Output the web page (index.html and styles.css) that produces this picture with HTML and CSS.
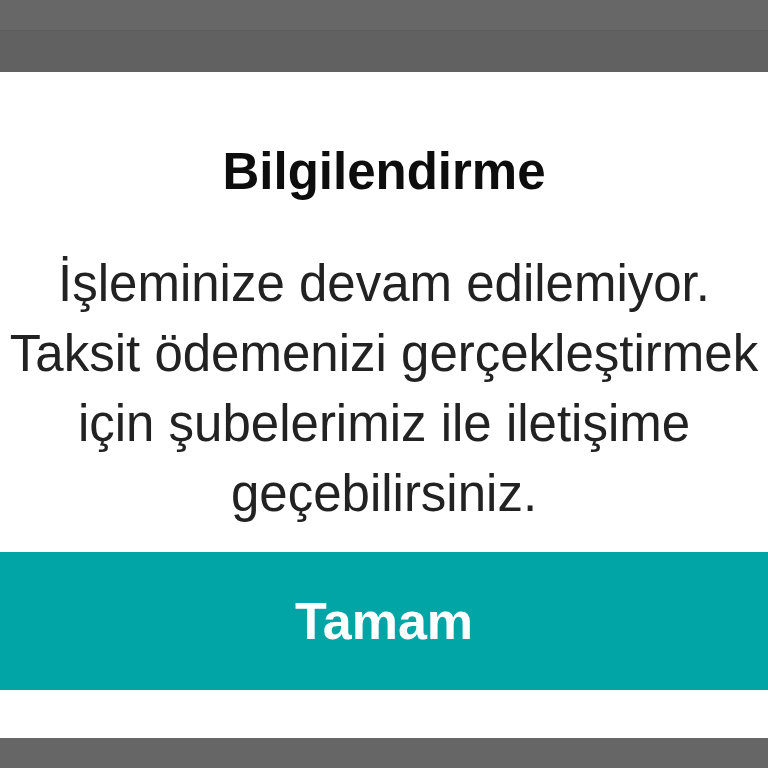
FILE: index.html
```html
<!DOCTYPE html>
<html>
<head>
  <title>Bilgilendirme</title>
  <link rel="stylesheet" href="styles.css">
</head>
<body>
  <!-- dimmed page behind the dialog -->
  <div class="top-bar">
    <div class="top-strip"></div>
    <div class="top-under"></div>
  </div>

  <div class="dialog">
    <h1 class="title">Bilgilendirme</h1>
    <p class="message">
      İşleminize devam edilemiyor.<br>
      Taksit ödemenizi gerçekleştirmek<br>
      için şubelerimiz ile iletişime<br>
      geçebilirsiniz.
    </p>
    <button class="ok-btn">Tamam</button>
  </div>

  <div class="bottom-bar"></div>
</body>
</html>
```

FILE: styles.css
```css
* {
  box-sizing: border-box;
  margin: 0;
  padding: 0;
  font-family: "Liberation Sans", Arial, sans-serif;
}

body {
  width: 768px;
  height: 768px;
  overflow: hidden;
  background-color: #666666;
}

/* Gray backdrop above the dialog */
.top-bar {
  height: 72px;
}

.top-strip {
  height: 30px;
  background-color: #676767;
}

.top-under {
  height: 42px;
  background-color: #616161;
  border-top: 1px solid #5d5d5d;
}

/* The white dialog */
.dialog {
  background-color: #ffffff;
  padding: 70px 0 48px;
  text-align: center;
  overflow: hidden;
}

.title {
  font-size: 51px;
  line-height: 60px;
  font-weight: bold;
  color: #0d0d0d;
}

.message {
  margin-top: 47px;
  font-size: 51px;
  line-height: 70px;
  font-weight: normal;
  color: #222222;
  white-space: nowrap;
}

.ok-btn {
  display: block;
  width: 100%;
  height: 138px;
  margin-top: 23px;
  border: none;
  background-color: #02a5a5;
  color: #ffffff;
  font-size: 52px;
  font-weight: bold;
  cursor: pointer;
}

.bottom-bar {
  height: 30px;
  background-color: #666666;
}
```
